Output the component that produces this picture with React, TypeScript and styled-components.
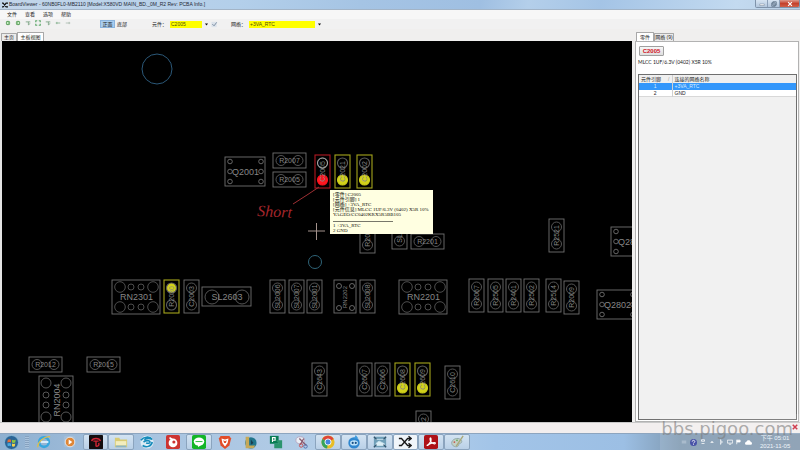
import React from "react";
import styled, { createGlobalStyle, css } from "styled-components";

const GlobalStyle = createGlobalStyle`
  * { box-sizing: border-box; }
  body { margin: 0; background: #f0efee; }
  button, input, table { font: inherit; color: inherit; }
  button { border: 0; padding: 0; background: none; }
`;

const Shell = styled.div`
  display: flex;
  flex-direction: column;
  height: 100vh;
  overflow: hidden;
  position: relative;
  font: 5px/8px "Liberation Sans", "Noto Sans CJK SC", sans-serif;
  color: #1a1a1a;
  background: #f0efee;
`;

const TitleBar = styled.header`
  display: flex;
  align-items: center;
  height: 10px;
  flex: none;
  padding-left: 2px;
  gap: 1px;
  background: linear-gradient(100deg, #c3d6ea 0%, #b3cfea 30%, #a5c4e4 45%, #9fbfe2 60%, #b4cfea 66%, #a4c4e6 75%, #c3daf0 92%, #b9cfe4 100%);
  border-bottom: 1px solid #a3b4c6;
`;

const Title = styled.h1`
  flex: 1;
  margin: 0;
  font: 400 5px/9px "Liberation Sans", "Noto Sans CJK SC", sans-serif;
  color: #1f2833;
`;

const WindowButtons = styled.div`
  display: flex;
  align-self: flex-start;
  height: 8px;
  border: 1px solid #7f93aa;
  border-top: 0;
  border-radius: 0 0 2px 2px;
  overflow: hidden;
`;

const WindowButton = styled.button<{ $close?: boolean }>`
  display: grid;
  place-items: center;
  width: ${(p) => (p.$close ? 19 : 12)}px;
  background: ${(p) =>
    p.$close ? "linear-gradient(#dd9a8c, #c5412c 50%, #cf6048)" : "linear-gradient(#d6e4f2, #b2c6dc)"};
  border-right: ${(p) => (p.$close ? 0 : 1)}px solid #8ca0b8;
`;

const MenuBar = styled.nav`
  display: flex;
  gap: 8px;
  height: 9px;
  flex: none;
  padding: 0 7px;
  background: #f7f7f7;
  line-height: 9px;
`;

const Toolbar = styled.div`
  display: flex;
  align-items: center;
  height: 10px;
  flex: none;
  padding-left: 5px;
  background: #f1f1f1;
`;

const ToolIcons = styled.div`
  display: flex;
  align-items: center;
  gap: 4px;
  width: 95px;
`;

const SideButton = styled.button<{ $on?: boolean }>`
  height: 8px;
  width: ${(p) => (p.$on ? 15 : 14)}px;
  line-height: 7px;
  ${(p) => p.$on && css`background: #a9cdef; border: 1px solid #8bb4dd; line-height: 6px;`}
`;

const Field = styled.label<{ $lead: number; $width: number }>`
  display: flex;
  align-items: center;
  margin-left: ${(p) => p.$lead}px;
  span { width: 18px; }
  input {
    width: ${(p) => p.$width}px;
    height: 7px;
    padding: 0 1px;
    border: 0;
    background: #ffff00;
    color: #4c4c00;
    line-height: 7px;
  }
`;

const Glyph = styled.button`
  display: grid;
  place-items: center;
  width: 8px;
  height: 8px;
`;

const Workspace = styled.main`
  display: flex;
  flex: 1;
  min-height: 0;
`;

const BoardColumn = styled.section`
  display: flex;
  flex-direction: column;
  flex: 1;
  min-width: 0;
`;

const Tabs = styled.div`
  display: flex;
  align-items: flex-end;
  height: 12px;
  flex: none;
  padding-left: 1px;
`;

const Tab = styled.button<{ $on?: boolean; $width: number }>`
  width: ${(p) => p.$width}px;
  height: ${(p) => (p.$on ? 9 : 8)}px;
  border: 1px solid #a8a8a8;
  border-bottom: 0;
  border-radius: 1px 1px 0 0;
  background: ${(p) => (p.$on ? "#ffffff" : "#ececec")};
  line-height: 7px;
  white-space: nowrap;
`;

const BoardView = styled.div`
  position: relative;
  flex: 1;
  min-height: 0;
  border-left: 2px solid #e4e4e4;
  background: #000;
  overflow: hidden;
  > svg { display: block; width: 100%; height: 100%; }
`;

const PinTip = styled.div`
  position: absolute;
  left: 328px;
  top: 149px;
  width: 103px;
  height: 44px;
  padding: 2px 3px;
  background: #ffffe1;
  color: #0c0c06;
  font: 5px/5px "Liberation Serif", "Noto Sans CJK SC", serif;
  white-space: nowrap;
  p { margin: 0; }
  hr { width: 60px; margin: 4px 0 1px; border: 0; border-top: 1px solid #77776a; }
`;

const SidePanel = styled.aside`
  display: flex;
  flex-direction: column;
  flex: none;
  width: 21%;
  padding: 0 1px 0 3px;
`;

const PanelBody = styled.div`
  display: flex;
  flex-direction: column;
  flex: 1;
  min-height: 0;
  padding: 4px 1px 1px 2px;
  border: 1px solid #b2b2b2;
  background: #fff;
`;

const PartButton = styled.button`
  align-self: flex-start;
  width: 25px;
  height: 10px;
  margin-left: 1px;
  border: 1px solid #a0a0a0;
  border-radius: 1px;
  background: linear-gradient(#f7f7f7, #dedede);
  color: #cf1424;
  font: 700 6px/8px "Liberation Sans", sans-serif;
`;

const PartInfo = styled.p`
  margin: 2px 0 7px;
  font-family: Lato, "Liberation Sans", sans-serif;
  line-height: 9px;
`;

const NetBox = styled.div`
  flex: 1;
  border: 1px solid #6f6f6f;
  background: #f1f1f1;
`;

const NetTable = styled.table`
  width: 100%;
  border-collapse: collapse;
  table-layout: fixed;
  th { height: 8px; padding: 0 2px; font-weight: 400; text-align: left; line-height: 8px; background: #f0f0f0; }
  th + th, td + td { border-left: 1px solid #d0d0d0; }
  th:first-child { width: 33px; }
  th span { float: right; color: #999; }
  td { height: 6px; padding: 0 2px; line-height: 6px; }
  td:first-child { text-align: center; }
`;

const NetRow = styled.tr<{ $on?: boolean }>`
  background: ${(p) => (p.$on ? "#3397fb" : "#fff")};
  color: ${(p) => (p.$on ? "#d8ecff" : "#222")};
  border-bottom: 1px solid ${(p) => (p.$on ? "#3397fb" : "#d8d8d8")};
`;

const StatusBar = styled.div`
  display: flex;
  justify-content: flex-end;
  align-items: center;
  height: 11px;
  flex: none;
  padding: 0 2px;
  background: #f2eeee;
  border-top: 1px solid #c8c8c8;
`;

const Taskbar = styled.footer`
  display: flex;
  align-items: center;
  height: 17px;
  flex: none;
  background: linear-gradient(90deg, #8fb0d0 0, #a9c4e0 20%, #b6d0ea 50%, #a2c4e8 62%, #9cbfe4 78%, #7f99b1 85%, #8298ae 100%);
  border-top: 1px solid #8da5bf;
`;

const StartButton = styled.button`
  display: grid;
  place-items: center;
  width: 23px;
  height: 16px;
`;

const Grip = styled.i`
  width: 4px;
  height: 12px;
  margin: 0 2px;
  background: repeating-linear-gradient(#86a2bf 0 1px, #a9c3dd 1px 2px);
`;

const Tasks = styled.div`
  display: grid;
  grid-template-columns: repeat(17, 1fr);
  width: 439px;
`;

const TaskButton = styled.button<{ $state?: "open" | "active" }>`
  display: grid;
  place-items: center;
  height: 16px;
  border: 1px solid transparent;
  ${(p) => p.$state && css`
    border-color: #8ba4be;
    border-radius: 2px;
    background: ${p.$state === "active" ? "#f0f5fa" : "linear-gradient(#d3e3f2, #b9d0e7)"};
  `}
`;

const Tray = styled.div`
  display: flex;
  align-items: center;
  gap: 3px;
  margin-left: auto;
  padding-right: 10px;
  color: #eef4fa;
`;

const Clock = styled.time`
  width: 30px;
  margin-left: 5px;
  font: 6px/8px "Liberation Sans", "Noto Sans CJK SC", sans-serif;
  text-align: center;
  white-space: nowrap;
`;

const Watermark = styled.div`
  position: absolute;
  right: 0;
  bottom: 0;
  width: 140px;
  height: 36px;
  padding: 5px 7px;
  background: rgba(255, 255, 255, 0.12);
  color: rgba(125, 125, 125, 0.62);
  font: 18px/20px "DejaVu Sans", sans-serif;
  display: flex;
  justify-content: flex-end;
  white-space: nowrap;
  pointer-events: none;
`;

const GREY = "#707070";
const YELLOW = "#a5a51c";

type PartProps = { x: number; y: number; label: string; color?: string; fill?: "top" | "bottom"; h?: number };

const textStyle = { fontFamily: "Liberation Sans, sans-serif", textAnchor: "middle" as const, fill: "#868686" };

function Upright({ x, y, label, color = GREY, fill, h = 33 }: PartProps) {
  const cx = x + 7;
  const solid = color === "#b01822" ? "#ff1620" : "#d2d21a";
  return (
    <g fill="none" stroke={color} strokeWidth={color === GREY ? 0.9 : 1.1}>
      <rect x={x} y={y} width={15} height={h} />
      <circle cx={cx + 0.5} cy={y + 8} r={5} stroke="#5e5e5e" fill={fill === "top" ? solid : "none"} />
      <circle cx={cx + 0.5} cy={y + h - 8} r={5} stroke={fill === "bottom" ? solid : "#5e5e5e"} fill={fill === "bottom" ? solid : "none"} />
      <text {...textStyle} stroke="none" fontSize={7} transform={`translate(${cx + 3} ${y + h / 2}) rotate(-90)`}>{label}</text>
    </g>
  );
}

function Flat({ x, y, label }: PartProps) {
  return (
    <g fill="none" stroke={GREY} strokeWidth={0.9}>
      <rect x={x} y={y} width={33} height={15} />
      <circle cx={x + 8} cy={y + 7.5} r={5} stroke="#5e5e5e" />
      <circle cx={x + 25} cy={y + 7.5} r={5} stroke="#5e5e5e" />
      <text {...textStyle} stroke="none" fontSize={7} x={x + 16.5} y={y + 10}>{label}</text>
    </g>
  );
}

function Transistor({ x, y, label }: PartProps) {
  return (
    <g fill="none" stroke={GREY} strokeWidth={0.9}>
      <rect x={x} y={y} width={40} height={29} />
      {[5, 36].map((dx) => [4.5, 14.5, 24.5].map((dy) => <circle key={`${dx}-${dy}`} cx={x + dx} cy={y + dy} r={2.3} />))}
      <text {...textStyle} stroke="none" fontSize={9} x={x + 20.5} y={y + 18}>{label}</text>
    </g>
  );
}

function Network({ x, y, label }: PartProps) {
  return (
    <g fill="none" stroke={GREY} strokeWidth={0.9}>
      <rect x={x} y={y} width={48} height={34} />
      {[7, 27].map((dy) => [8, 19, 29, 41].map((dx, i) => (
        <circle key={`${dx}-${dy}`} cx={x + dx} cy={y + dy} r={i === 0 || i === 3 ? 5.3 : 3} stroke="#565656" />
      )))}
      <text {...textStyle} stroke="none" fontSize={9} x={x + 24.5} y={y + 20}>{label}</text>
    </g>
  );
}

const uprights: PartProps[] = [
  { x: 335, y: 155, label: "C2021", color: YELLOW, fill: "bottom" },
  { x: 357, y: 155, label: "C2002", color: YELLOW, fill: "bottom" },
  { x: 360, y: 220, label: "R2025" },
  { x: 392, y: 216, label: "SL220" },
  { x: 549, y: 219, label: "R2521" },
  { x: 164, y: 280, label: "R2030", color: YELLOW, fill: "top" },
  { x: 184, y: 280, label: "C2003" },
  { x: 270, y: 280, label: "SL2006" },
  { x: 289, y: 280, label: "SL2007" },
  { x: 307, y: 280, label: "SL2001" },
  { x: 360, y: 280, label: "SL2008" },
  { x: 469, y: 279, label: "R2067" },
  { x: 488, y: 279, label: "R2505" },
  { x: 506, y: 279, label: "R2401" },
  { x: 524, y: 279, label: "R2502" },
  { x: 546, y: 279, label: "R2514" },
  { x: 564, y: 281, label: "R2009" },
  { x: 312, y: 363, label: "C2643" },
  { x: 357, y: 363, label: "C2607" },
  { x: 375, y: 363, label: "C2606" },
  { x: 395, y: 363, label: "C2608", color: YELLOW, fill: "bottom" },
  { x: 415, y: 363, label: "C2609", color: YELLOW, fill: "bottom" },
  { x: 445, y: 366, label: "C2610" },
  { x: 416, y: 411, label: "R2622" },
];

function Board() {
  return (
    <svg role="img" aria-label="PCB layout">
      <g transform="translate(-2 -41)">
        <circle cx={157} cy={69} r={15} fill="none" stroke="#2b5878" />
        <circle cx={315} cy={262} r={6.5} fill="none" stroke="#2f6478" />
        <Transistor x={225} y={157} label="Q2001" />
        <Transistor x={611} y={227} label="Q2803" />
        <Transistor x={597} y={290} label="Q2802" />
        <Flat x={273} y={153} label="R2007" />
        <Flat x={273} y={172} label="R2005" />
        <Flat x={411} y={234} label="R2201" />
        <Flat x={29} y={357} label="R2012" />
        <Flat x={87} y={357} label="R2015" />
        <Network x={112} y={280} label="RN2301" />
        <Network x={399} y={280} label="RN2201" />
        {uprights.map((p) => <Upright key={p.label} {...p} />)}
        <Upright x={315} y={155} label="C2005" color="#b01822" fill="bottom" />
        <circle cx={322.5} cy={163} r={5} fill="none" stroke="#bbb" strokeWidth={0.8} />
        <g fill="none" stroke={GREY} strokeWidth={0.9}>
          <rect x={202} y={287} width={49} height={19} />
          <circle cx={212} cy={297} r={7} stroke="#5e5e5e" />
          <circle cx={242} cy={297} r={7} stroke="#5e5e5e" />
          <text {...textStyle} stroke="none" fontSize={9} x={227} y={300}>SL2603</text>
          <rect x={334} y={280} width={22} height={33} />
          {[339, 352].map((x) => [286, 308].map((y) => <circle key={`${x}-${y}`} cx={x} cy={y} r={2.5} />))}
          <text {...textStyle} stroke="none" fontSize={6} transform="translate(347 297) rotate(-90)">RN2202</text>
          <rect x={39} y={376} width={34} height={48} />
          {[46, 66].map((x) => (
            <g key={x} stroke="#606060">
              <circle cx={x} cy={383} r={5} />
              <circle cx={x} cy={395} r={3} />
              <circle cx={x} cy={405} r={3} />
              <circle cx={x} cy={417} r={5} />
            </g>
          ))}
          <text {...textStyle} stroke="none" fontSize={9} transform="translate(60 400) rotate(-90)">RN2004</text>
        </g>
        <path d="M308 231h17M316.500 223v17" stroke="#a3928c" />
        <path d="M319 187L307 195L293 204" fill="none" stroke="#a03034" />
        <text x={257} y={216} fontSize={16} fontStyle="italic" fontFamily="Liberation Serif, serif" fill="#a5262c" transform="rotate(3 257 216)">Short</text>
      </g>
    </svg>
  );
}

const Svg = ({ children, s = 14 }: { children: React.ReactNode; s?: number }) => (
  <svg width={s} height={s} viewBox="0 0 16 16" fill="none" aria-hidden="true">{children}</svg>
);

const tools: [string, React.ReactNode][] = [
  ["Back", <><circle cx="8" cy="8" r="6" fill="#60a260" /><path d="M12 8H5l3-3M5 8l3 3" stroke="#e4ffe0" strokeWidth="2" /></>],
  ["Forward", <><circle cx="8" cy="8" r="6" fill="#60a260" /><path d="M4 8h7L8 5m3 3-3 3" stroke="#e4ffe0" strokeWidth="2" /></>],
  ["Zoom in", <path d="M2 5h12M9 5v8l5-4" stroke="#6c9a76" strokeWidth="2" />],
  ["Fit", <path d="M2 6V2h4m4 0h4v4m0 4v4h-4m-4 0H2v-4" stroke="#5fa86b" strokeWidth="3" />],
  ["Zoom out", <path d="M2 5h12M9 5v8l5-4" stroke="#6c9a76" strokeWidth="2" />],
  ["Rotate left", <path d="M2 8h12M5 5v6" stroke="#79a984" strokeWidth="2" />],
  ["Rotate right", <path d="M2 8h12M11 5v6" stroke="#a3b6a8" strokeWidth="2" />],
];

const tasks: [string, React.ReactNode, ("open" | "active")?][] = [
  ["Internet Explorer", <><circle cx="8" cy="8" r="5.500" stroke="#36a7df" strokeWidth="3" /><path d="M4 8h9" stroke="#e0f4ff" strokeWidth="2" /><path d="M1 14C0 9 8 1 15 2" stroke="#d8bd52" strokeWidth="1.500" /></>],
  ["Media Player", <><rect x="1" y="1" width="13" height="13" rx="2" fill="#a5bfd9" /><circle cx="8" cy="8" r="5.500" fill="#df8635" stroke="#e5edf5" /><path d="M6.500 5v6l4-3z" fill="#fff" /></>],
  ["Garena", <><rect width="16" height="16" rx="1" fill="#130d0f" /><path d="M3 7c1-4 9-4 10 0M5 7h6M8 7v6m0 0c3 0 4-2 3-4" stroke="#ce2434" strokeWidth="1.600" /></>, "open"],
  ["Explorer", <><path d="M1 3h5l1 2h8v9H1z" fill="#d9cb75" /><path d="M2 7h12v5H2z" fill="#f3edbd" /><path d="M2 12h12v2H2z" fill="#8cb5c5" /></>, "open"],
  ["Ocean", <><circle cx="8" cy="8" r="7.500" fill="#dcecf5" /><path d="M1 6c3-4 10-5 13-1-4-2-8-1-9 1M4 8c4-3 9-1 7 1-2 1-4 0-4 0M3 12c4 3 10 1 11-4" stroke="#168bbb" strokeWidth="1.800" /></>],
  ["Camera", <><rect width="16" height="16" rx="2" fill="#cd3431" /><circle cx="8" cy="9" r="5" fill="#fff" /><circle cx="9" cy="8" r="1.800" fill="#c33" /><path d="M4 3l3 2" stroke="#fff" strokeWidth="2" /></>],
  ["LINE", <><rect width="16" height="16" rx="2" fill="#12b527" /><ellipse cx="8" cy="7.500" rx="6" ry="4.700" fill="#fff" /><path d="M7 10v4l5-4" fill="#fff" /><path d="M4 7.500h8" stroke="#12b527" /></>, "open"],
  ["Brave", <><path d="M3 1h10l2 3-2 8-5 4-5-4-2-8z" fill="#e24c28" /><path d="M4 4l4 1 4-1-1 5-3 4-3-4z" fill="#fff" /><path d="M6 6l2 1 2-1-1 3H7z" fill="#e24c28" /></>],
  ["League", <><circle cx="9" cy="9" r="6.500" fill="#21758b" /><path d="M3 2h4v10h7l-2 3H3z" fill="#c5a858" /><path d="M9 5l3 4-3 2z" fill="#183e4e" /></>],
  ["Publisher", <><path d="M1 1h10v9H1z" fill="#087c54" /><path d="M8 6h7v9H6v-5h5z" fill="#2b946e" /><path d="M4 8V3h3v3H4" stroke="#fff" strokeWidth="1.300" /></>],
  ["Snipping Tool", <><ellipse cx="6" cy="6" rx="5" ry="4" fill="#e9eef5" stroke="#b2a4bd" /><path d="M5 4l8 8M10 4 6 11" stroke="#895b70" strokeWidth="1.500" /><circle cx="12" cy="13" r="2" stroke="#4b6bac" /><circle cx="7" cy="12" r="2" stroke="#c94948" /></>],
  ["Chrome", <><circle cx="8" cy="8" r="7.500" fill="#e8bd25" /><path d="M8 8 1.500 4.500A7.500 7.500 0 0 1 14.500 4.500z" fill="#df4638" /><path d="M8 8 1.500 4.500A7.500 7.500 0 0 0 7 15.500z" fill="#34a45c" /><circle cx="8" cy="8" r="3.500" fill="#4386df" stroke="#fff" /></>, "open"],
  ["Blue Bird", <><circle cx="8" cy="9" r="6.500" fill="#2f87cf" /><path d="M8 4 10 0l3 4" fill="#3f9bdd" /><ellipse cx="8" cy="9" rx="4.500" ry="3" fill="#bfe2f8" /><circle cx="6.500" cy="9" r="1.200" fill="#164f86" /><circle cx="10" cy="9" r="1.200" fill="#164f86" /></>, "open"],
  ["Pictures", <><rect x="1" y="2" width="14" height="12" fill="#6f9fb8" /><path d="M3 5h10M4 9l3-2 6 3v2H3z" fill="#dceef5" stroke="#cce3ef" /><path d="M1 2l3 3m11-3-3 3M1 14l3-3m11 3-3-3" stroke="#35546e" strokeWidth="1.500" /></>, "open"],
  ["BoardViewer", <path d="M1 4h3l7 8h4M1 12h3l7-8h4M12 1.500 15 4l-3 2.500M12 9.500l3 2.500-3 2.500" stroke="#171717" strokeWidth="1.500" />, "active"],
  ["Acrobat", <><rect width="16" height="16" rx="2" fill="#ae1117" /><path d="M3 12c3-1 6-6 5-8-1-2-2 1 0 4 2 2 5 3 5 1 0-1-6 0-9 3" stroke="#fff" strokeWidth="1.300" /></>, "open"],
  ["Paint", <><path d="M2 8c2-5 9-5 11-2 2 4-3 3-3 5 0 4-9 3-8-3z" fill="#c3d0c6" stroke="#8da6a4" /><circle cx="5" cy="8" r="1" fill="#c65548" /><circle cx="8" cy="6" r="1" fill="#5caa55" /><path d="M15 1 7 13" stroke="#a9a87a" strokeWidth="1.600" /></>, "open"],
];

export default function App() {
  return (
    <Shell>
      <GlobalStyle />
      <TitleBar>
        <Svg s={6}><path d="M0 3h3l8 10h5M0 13h3l8-10h5" stroke="#111" strokeWidth="3" /></Svg>
        <Title>BoardViewer - 60NB0FL0-MB2110 [Model:X580VD MAIN_BD._0M_R2 Rev: PCBA Info.]</Title>
        <WindowButtons>
          <WindowButton aria-label="Minimize"><Svg s={6}><path d="M2 8h12v4H2z" fill="#fff" stroke="#53677c" /></Svg></WindowButton>
          <WindowButton aria-label="Maximize"><Svg s={6}><path d="M5 2h9v9H5zM2 5h9v9H2z" stroke="#53677c" strokeWidth="2" /></Svg></WindowButton>
          <WindowButton $close aria-label="Close"><Svg s={6}><path d="m3 3 10 10M13 3 3 13" stroke="#fff" strokeWidth="3" /></Svg></WindowButton>
        </WindowButtons>
      </TitleBar>
      <MenuBar>
        {["文件", "查看", "选项", "帮助"].map((m) => <button key={m}>{m}</button>)}
      </MenuBar>
      <Toolbar>
        <ToolIcons>
          {tools.map(([name, icon]) => <button key={name} aria-label={name}><Svg s={6}>{icon}</Svg></button>)}
        </ToolIcons>
        <SideButton $on>正面</SideButton>
        <SideButton>底部</SideButton>
        <Field $lead={23} $width={32}><span>元件：</span><input defaultValue="C2005" /></Field>
        <Glyph aria-label="Part list"><Svg s={5}><path d="M3 5h10l-5 6z" fill="#111" /></Svg></Glyph>
        <Glyph aria-label="Apply"><Svg s={7}><rect x="1" y="2" width="12" height="12" fill="#dce3eb" /><path d="m3 7 4 4 6-8" stroke="#74879b" strokeWidth="2" /></Svg></Glyph>
        <Field $lead={13} $width={66}><span>网络：</span><input defaultValue="+3VA_RTC" /></Field>
        <Glyph aria-label="Net list"><Svg s={5}><path d="M3 5h10l-5 6z" fill="#111" /></Svg></Glyph>
      </Toolbar>
      <Workspace>
        <BoardColumn>
          <Tabs>
            <Tab $width={16}>主页</Tab>
            <Tab $on $width={27}>主板视图</Tab>
          </Tabs>
          <BoardView>
            <Board />
            <PinTip role="tooltip">
              <p>[零件] C2005</p>
              <p>[元件引脚] 1</p>
              <p>[网络] +3VA_RTC</p>
              <p>[元件信息] MLCC 1UF/6.3V (0402) X5R 10%</p>
              <p>YAGEO/CC0402KRX5R5BB105</p>
              <hr />
              <p>1 +3VA_RTC</p>
              <p>2 GND</p>
            </PinTip>
          </BoardView>
        </BoardColumn>
        <SidePanel>
          <Tabs>
            <Tab $on $width={18}>零件</Tab>
            <Tab $width={20}>网络 (9)</Tab>
          </Tabs>
          <PanelBody>
            <PartButton>C2005</PartButton>
            <PartInfo>MLCC 1UF/6.3V (0402) X5R 10%</PartInfo>
            <NetBox>
              <NetTable>
                <thead><tr><th>元件引脚<span>/</span></th><th>连接的网络名称</th></tr></thead>
                <tbody>
                  <NetRow $on><td>1</td><td>+3VA_RTC</td></NetRow>
                  <NetRow><td>2</td><td>GND</td></NetRow>
                </tbody>
              </NetTable>
            </NetBox>
          </PanelBody>
        </SidePanel>
      </Workspace>
      <StatusBar>
        <button aria-label="Dismiss"><Svg s={6}><path d="m2 2 12 12M14 2 2 14" stroke="#ca2438" strokeWidth="4" /></Svg></button>
      </StatusBar>
      <Taskbar>
        <StartButton aria-label="Start">
          <Svg s={15}>
            <circle cx="8" cy="8" r="7.500" fill="#2b6495" stroke="#8cbbd8" />
            <path d="M4 5q2-1 3.500 0v3Q6 7 3.500 8z" fill="#e36b36" />
            <path d="M8.500 5q2 1 4 0L12 8q-2 1-3.500 0z" fill="#8dc63f" />
            <path d="M3.500 9q2-1 4 0v3Q6 11 4 12z" fill="#48aadf" />
            <path d="M8.500 9q2 1 3.500 0l-.5 3q-1.500 1-3 0z" fill="#f3d14c" />
          </Svg>
        </StartButton>
        <Grip />
        <Tasks>
          {tasks.map(([name, icon, state]) => <TaskButton key={name} $state={state} aria-label={name}><Svg>{icon}</Svg></TaskButton>)}
        </Tasks>
        <Tray>
          <Svg s={6}><path d="M2 4h12v8H2z" fill="#9eb2c5" /></Svg>
          <Svg s={7}><circle cx="8" cy="8" r="8" fill="#303c9c" /><path d="M5 6c0-4 6-4 6 0 0 2-3 2-3 4m0 1v2" stroke="#fff" strokeWidth="2" /></Svg>
          <Svg s={6}><path d="M4 2h8v4H4zM4 12h8" stroke="#fff" strokeWidth="2" /></Svg>
          <Svg s={6}><path d="M3 10l5-5 5 5z" fill="#fff" /></Svg>
          <Svg s={6}><path d="M7 1v14M7 4l5 4-5 4" stroke="#fff" strokeWidth="2" /></Svg>
          <Svg s={6}><path d="M1 3h14v8H1zM5 14h6" stroke="#fff" strokeWidth="2" /></Svg>
          <Svg s={6}><path d="M2 2v12M2 3h9v5H2" fill="#fff" stroke="#fff" strokeWidth="2" /></Svg>
          <Svg s={7}><path d="M3 13a3 3 0 0 1 0-6c1-6 10-5 10 0a3 3 0 0 1 0 6z" fill="#fff" /></Svg>
          <Clock>下午 05:01<br />2021-11-05</Clock>
        </Tray>
      </Taskbar>
      <Watermark>bbs.pigoo.com</Watermark>
    </Shell>
  );
}
